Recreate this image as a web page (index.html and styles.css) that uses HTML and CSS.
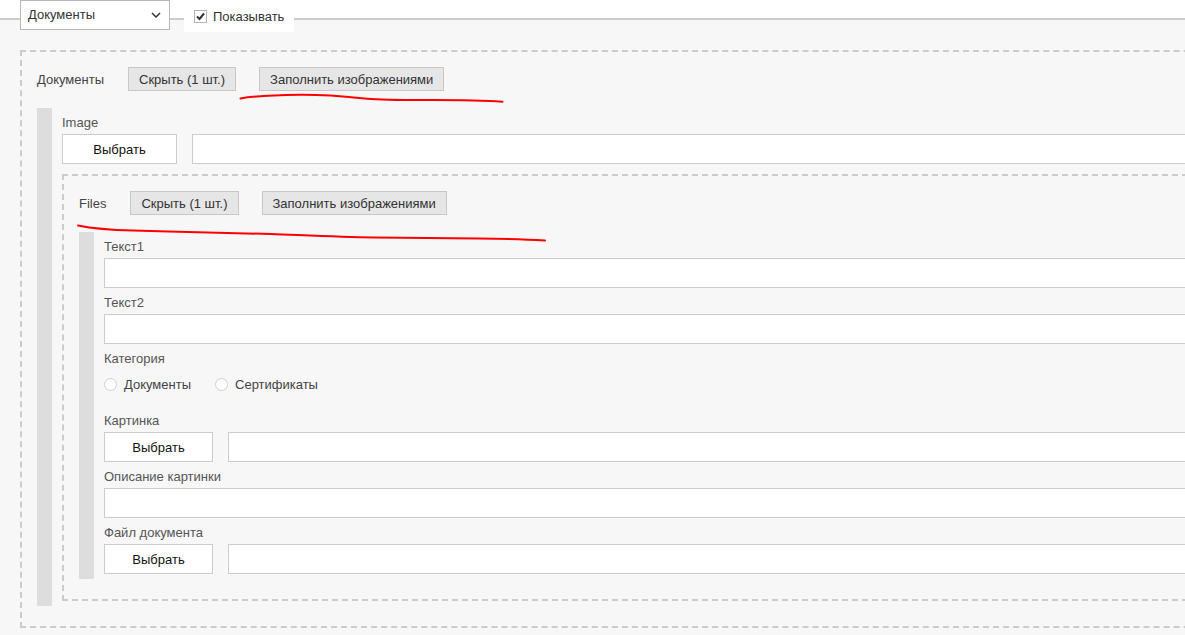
FILE: index.html
```html
<!DOCTYPE html>
<html lang="ru">
<head>
    <meta charset="UTF-8">
    <meta name="viewport" content="width=device-width, initial-scale=1.0">
    <title>Документы</title>
    <link rel="stylesheet" href="styles.css">
</head>
<body>
    <div class="page">
        <div class="toolbar">
            <div class="select">
                <span>Документы</span>
                <svg width="10" height="6" viewBox="0 0 10 6"><path d="M1 1 L5 5 L9 1" fill="none" stroke="#333" stroke-width="1.5"/></svg>
            </div>
            <label class="show">
                <span class="check"><svg width="11" height="11" viewBox="0 0 11 11"><path d="M2 5.5 L4.5 8 L9 2.5" fill="none" stroke="#333" stroke-width="2"/></svg></span>
                Показывать
            </label>
        </div>

        <div class="panel">
            <div class="group">
                <div class="group-head">
                    <span class="group-title">Документы</span>
                    <button class="btn">Скрыть (1 шт.)</button>
                    <button class="btn">Заполнить изображениями</button>
                </div>
                <div class="item">
                    <div class="field">
                        <label>Image</label>
                        <div class="file-row">
                            <button class="pick">Выбрать</button>
                            <input class="text" type="text">
                        </div>
                    </div>

                    <!-- вложенный список файлов -->
                    <div class="group nested">
                        <div class="group-head">
                            <span class="group-title">Files</span>
                            <button class="btn">Скрыть (1 шт.)</button>
                            <button class="btn">Заполнить изображениями</button>
                        </div>
                        <div class="item">
                            <div class="field">
                                <label>Текст1</label>
                                <input class="text" type="text">
                            </div>
                            <div class="field">
                                <label>Текст2</label>
                                <input class="text" type="text">
                            </div>
                            <div class="field">
                                <label>Категория</label>
                                <div class="radios">
                                    <label class="radio"><span class="dot"></span>Документы</label>
                                    <label class="radio"><span class="dot"></span>Сертификаты</label>
                                </div>
                            </div>
                            <div class="field">
                                <label>Картинка</label>
                                <div class="file-row">
                                    <button class="pick">Выбрать</button>
                                    <input class="text" type="text">
                                </div>
                            </div>
                            <div class="field">
                                <label>Описание картинки</label>
                                <input class="text" type="text">
                            </div>
                            <div class="field">
                                <label>Файл документа</label>
                                <div class="file-row">
                                    <button class="pick">Выбрать</button>
                                    <input class="text" type="text">
                                </div>
                            </div>
                        </div>
                    </div>
                </div>
            </div>
        </div>

        <!-- пометки от руки поверх формы -->
        <svg class="marks" width="1185" height="635" viewBox="0 0 1185 635">
            <path d="M240.5 98.5 C252 96.5 270 95.2 300 94.8 C330 94.6 350 97 367 98.7 C385 100.2 410 100 433 100 C460 100 485 100.5 502.5 101.7" fill="none" stroke="#f00" stroke-width="2" stroke-linecap="round"/>
            <path d="M78 225.5 C95 229 110 230 133 230.5 C180 231.8 230 233 271 234 C310 235.5 340 237 374 237.5 C410 238 450 238.2 478 238.5 C500 238.7 520 239 545 240.5" fill="none" stroke="#f00" stroke-width="2" stroke-linecap="round"/>
        </svg>
    </div>
</body>
</html>
```

FILE: styles.css
```css
* {
    box-sizing: border-box;
    margin: 0;
    padding: 0;
}

html, body {
    overflow: hidden;
}

body {
    font-family: "Liberation Sans", Arial, sans-serif;
    font-size: 13px;
    color: #444;
    background: #fff;
}

.page {
    position: relative;
    width: 1300px;
}

/* верхняя строка: выбор раздела и флажок */
.toolbar {
    position: relative;
    z-index: 1;
    display: flex;
    align-items: flex-start;
    height: 32px;
    padding-left: 20px;
}

.select {
    width: 150px;
    height: 30px;
    border: 1px solid #b8b8b8;
    background: #fff;
    color: #333;
    display: flex;
    align-items: center;
    justify-content: space-between;
    padding: 0 8px 1px 7px;
}

.show {
    margin-left: 14px;
    height: 32px;
    background: #fff;
    color: #333;
    display: flex;
    align-items: center;
    gap: 6px;
    padding: 0 10px;
}

.check {
    width: 13px;
    height: 13px;
    border: 1px solid #b5b5b5;
    background: #fff;
    display: flex;
    align-items: center;
    justify-content: center;
}

.panel {
    margin-top: -14px;
    border-top: 2px solid #ccc;
    background: #f7f7f7;
    padding: 30px 0 7px 20px;
}

/* группа повторяющихся элементов */
.group {
    border: 2px dashed #ccc;
    padding: 15px 0 20px 15px;
}

.nested {
    margin-top: 10px;
}

.group-head {
    display: flex;
    align-items: center;
    gap: 23px;
    height: 24px;
    margin-bottom: 17px;
}

.group-title {
    color: #444;
    margin-right: 1px;
}

.btn {
    height: 24px;
    padding: 0 10px;
    border: 1px solid #c8c8c8;
    background: #e6e6e6;
    color: #333;
    font: inherit;
}

.item {
    border-left: 15px solid #ddd;
    padding: 0 0 5px 10px;
}

.field {
    padding-top: 6px;
}

.field > label {
    display: block;
    line-height: 18px;
    padding-bottom: 2px;
    color: #555;
}

.text {
    display: block;
    width: 100%;
    height: 30px;
    border: 1px solid #ccc;
    background: #fff;
    font: inherit;
}

.file-row {
    display: flex;
    gap: 15px;
}

.file-row .text {
    flex: 1;
}

.pick {
    flex: none;
    width: 115px;
    height: 30px;
    border: 1px solid #ccc;
    background: #fff;
    color: #111;
    font: inherit;
}

.nested .pick {
    width: 109px;
}

.radios {
    display: flex;
    align-items: center;
    gap: 24px;
    height: 29px;
    margin-bottom: 7px;
}

.radio {
    display: flex;
    align-items: center;
    gap: 7px;
    color: #444;
}

.dot {
    width: 13px;
    height: 13px;
    border: 1px solid #cfcfcf;
    border-radius: 50%;
    background: #fff;
}

.marks {
    position: absolute;
    top: 0;
    left: 0;
    pointer-events: none;
}
```
